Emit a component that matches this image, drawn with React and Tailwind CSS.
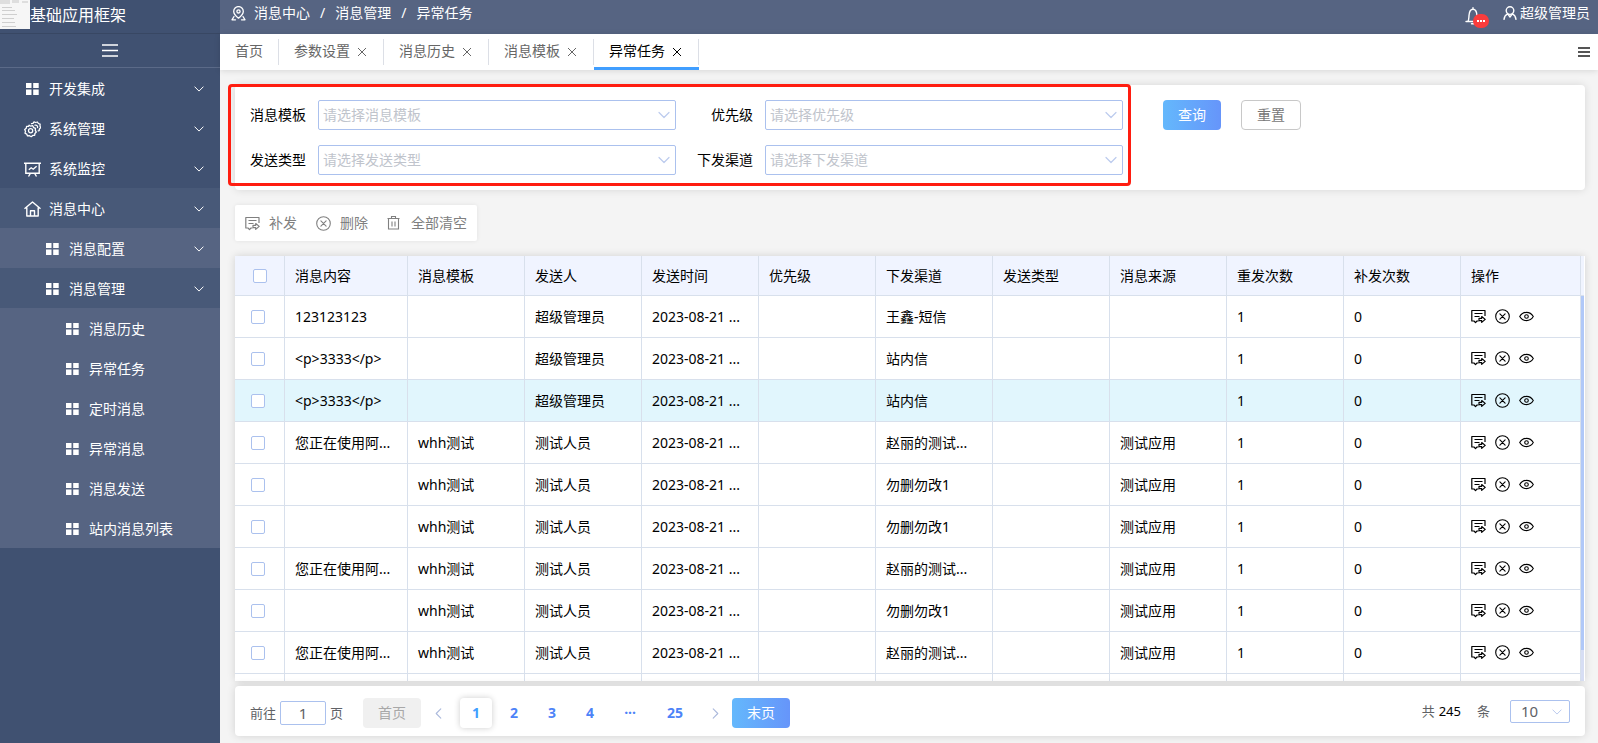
import React, { useState } from 'react'
import clsx from 'clsx'

const GridIcon = () => (
  <svg className="w-[13px] h-[12px] shrink-0" viewBox="0 0 13 12" fill="currentColor">
    <path d="M0 0h5.500v5H0zM7.200 0h5.500v5H7.200zM0 6.500h5.500V12H0zM7.200 6.500h5.500V12H7.200z" />
  </svg>
)

const GearIcon = () => (
  <svg className="w-[17px] h-[17px] shrink-0" viewBox="0 0 17 17" fill="none" stroke="currentColor" strokeWidth="1.300" strokeLinejoin="round" strokeLinecap="round">
    <path d="M5.200 4.200l1.600 1 1.900-.5 1 1.900 1.800.8-.2 2 1 1.700-1.400 1.300-.2 1.900-2 .1-1.500 1.300-1.700-1-2 .2-.8-1.800L1 12.200l.5-1.900-.8-1.800 1.500-1.200.4-1.900 1.900-.1z" />
    <circle cx="6.600" cy="9.800" r="2.100" />
    <path d="M7.500 2.600L9 2.300l1-1.500 1.700.7 1.700-.5 1 1.500 1.700.7-.1 1.900.7 1.600-1.300 1.200-.2 1.700-1 .3M11 4.200c1.600-.5 2.900.8 2.500 2.300" />
  </svg>
)

const MonitorIcon = () => (
  <svg className="w-[17px] h-[15px] shrink-0" viewBox="0 0 17 15" fill="none" stroke="currentColor" strokeWidth="1.400">
    <path d="M0 1.200h17M1.800 1.200v10h13.400v-10M4.800 7.800l2.400-2 2 1.400 3.400-3M6.500 11.200l-2 3.300M10.500 11.200l2 3.300" />
  </svg>
)

const HomeIcon = () => (
  <svg className="w-[17px] h-[16px] shrink-0" viewBox="0 0 17 16" fill="none" stroke="currentColor" strokeWidth="1.400" strokeLinejoin="round">
    <path d="M.5 7.800L8.500 1l8 6.800M2.800 6.500v8.500h11.400V6.500M6.500 15V9.800h4V15" />
  </svg>
)

const ChevronDown = ({ className }) => (
  <svg className={className} viewBox="0 0 12 12" fill="none" stroke="currentColor" strokeWidth="1.200" strokeLinecap="round" strokeLinejoin="round">
    <path d="M1 3.500l5 5 5-5" />
  </svg>
)

const CloseIcon = () => (
  <svg className="block w-3 h-3 p-[2px] overflow-visible" viewBox="0 0 8 8" fill="none" stroke="currentColor" strokeWidth="1">
    <path d="M0 0l8 8M8 0L0 8" />
  </svg>
)

const PinIcon = () => (
  <svg className="w-[15px] h-[15px]" viewBox="0 0 15 15" fill="none" stroke="currentColor" strokeWidth="1.300" strokeLinecap="round" strokeLinejoin="round">
    <path d="M7.500 12.200C4.700 9.900 2.700 8 2.700 5.400a4.800 4.800 0 019.600 0c0 2.600-2 4.500-4.800 6.800z" />
    <circle cx="7.500" cy="5.400" r="1.600" />
    <path d="M3 10.500L1 13.800h3.500M12 10.500l2 3.300h-3.500" />
  </svg>
)

const BellIcon = () => (
  <svg className="w-[18px] h-[18px]" viewBox="0 0 18 18" fill="none" stroke="currentColor" strokeWidth="1.400" strokeLinecap="round" strokeLinejoin="round">
    <path d="M1 14.500h14M2.800 14.500c1.200-1.500 1-3.500 1.200-6C4.200 5 5.500 2.200 8 2.200S11.800 5 12 8.500c.2 2.500 0 4.500 1.200 6M8 .8v1.400M6.500 16.800h3" />
  </svg>
)

const UserIcon = () => (
  <svg className="w-[14px] h-[14px]" viewBox="0 0 14 14" fill="none" stroke="currentColor" strokeWidth="1.400" strokeLinecap="round" strokeLinejoin="round">
    <circle cx="7" cy="4.600" r="3.800" />
    <path d="M1 13.300c.3-2.500 1.600-4.500 3.700-5.400L7 11l2.300-3.100c2.100.9 3.400 2.900 3.700 5.400" />
  </svg>
)

const ResendIcon = ({ className }) => (
  <svg className={className} viewBox="0 0 15 15" fill="none" stroke="currentColor" strokeWidth="1.200" strokeLinejoin="round">
    <path d="M14 7V1.500H.8v10.500h2.200l1.500 1.600L6 12h1.500M3.500 4.500h8M3.500 7.500h5" />
    <path d="M8 9.300h2.700V7.500l3.500 2.900-3.500 3v-1.700H8z" />
  </svg>
)

const CircleCloseIcon = ({ className }) => (
  <svg className={className} viewBox="0 0 15 15" fill="none" stroke="currentColor" strokeWidth="1.100" strokeLinecap="round">
    <circle cx="7.500" cy="7.500" r="6.800" />
    <path d="M4.900 4.900l5.200 5.200M10.100 4.900l-5.200 5.200" />
  </svg>
)

const EyeIcon = ({ className }) => (
  <svg className={className} viewBox="0 0 15 15" fill="none" stroke="currentColor" strokeWidth="1.100">
    <path d="M.7 7.500C2.300 4.800 4.700 3.400 7.500 3.400s5.200 1.400 6.800 4.100c-1.600 2.700-4 4.100-6.800 4.100S2.300 10.200.7 7.500z" />
    <circle cx="7.500" cy="7.500" r="1.800" />
  </svg>
)

const TrashIcon = ({ className }) => (
  <svg className={className} viewBox="0 0 13 14" fill="none" stroke="currentColor" strokeWidth="1.100">
    <path d="M.5 2.500h12M4.500 2.500v-2h4v2M1.500 2.500v10.500h10V2.500M5 5.500v5M8 5.500v5" />
  </svg>
)

const menus = [
  { name: '开发集成', icon: <GridIcon /> },
  { name: '系统管理', icon: <GearIcon /> },
  { name: '系统监控', icon: <MonitorIcon /> },
  { name: '消息中心', icon: <HomeIcon />, open: true },
]

const subMenus = [
  { name: '消息配置' },
  { name: '消息管理', open: true },
]

const leafMenus = ['消息历史', '异常任务', '定时消息', '异常消息', '消息发送', '站内消息列表']

const tabs = ['首页', '参数设置', '消息历史', '消息模板', '异常任务']

const columns = ['消息内容', '消息模板', '发送人', '发送时间', '优先级', '下发渠道', '发送类型', '消息来源', '重发次数', '补发次数']

const time = '2023-08-21 ...'
const rows = [
  ['123123123', '', '超级管理员', time, '', '王鑫-短信', '', '', '1', '0'],
  ['<p>3333</p>', '', '超级管理员', time, '', '站内信', '', '', '1', '0'],
  ['<p>3333</p>', '', '超级管理员', time, '', '站内信', '', '', '1', '0'],
  ['您正在使用阿...', 'whh测试', '测试人员', time, '', '赵丽的测试...', '', '测试应用', '1', '0'],
  ['', 'whh测试', '测试人员', time, '', '勿删勿改1', '', '测试应用', '1', '0'],
  ['', 'whh测试', '测试人员', time, '', '勿删勿改1', '', '测试应用', '1', '0'],
  ['您正在使用阿...', 'whh测试', '测试人员', time, '', '赵丽的测试...', '', '测试应用', '1', '0'],
  ['', 'whh测试', '测试人员', time, '', '勿删勿改1', '', '测试应用', '1', '0'],
  ['您正在使用阿...', 'whh测试', '测试人员', time, '', '赵丽的测试...', '', '测试应用', '1', '0'],
  ['', '', '', '', '', '', '', '', '', ''],
]

const Checkbox = ({ label }) => (
  <input
    type="checkbox"
    aria-label={label}
    className="block appearance-none w-[14px] h-[14px] bg-white border border-[#abc1ee] rounded-xs checked:bg-[#409eff]"
  />
)

const Sidebar = () => (
  <aside className="w-[220px] shrink-0 bg-[#405171] text-white">
    <div className="flex items-start h-[33px]">
      {/* ロゴ */}
      <svg className="w-[30px] h-[29px]" viewBox="0 0 30 29">
        <path fill="#f6f6f6" d="M0 0h30v29H0z" />
        <path fill="#dedede" d="M0 0h10v4H0zM12 0h7v3h-7zM22 1h6v2h-6z" />
        <path stroke="#cfcfcf" d="M2 7.500h10M2 10.500h13M2 14.500h15M2 18.500h12M2 22.500h13M2 26.500h14" />
      </svg>
      <h1 className="text-base leading-[30px]">基础应用框架</h1>
    </div>
    <button aria-label="折叠菜单" className="flex items-center justify-center w-full h-[35px] border-t border-t-[#384763] border-b border-b-[#5b6a88]">
      <svg className="w-4 h-[13px]" viewBox="0 0 16 13" stroke="currentColor" strokeWidth="1.300">
        <path d="M0 1h16M0 6.500h16M0 12h16" />
      </svg>
    </button>
    <nav className="text-sm">
      {menus.map((menu) => (
        <button key={menu.name} className={clsx('flex items-center w-full h-10 pl-6 pr-4 pt-[2px]', menu.open && 'bg-[#485978]')}>
          <span className="flex justify-center w-[17px] mr-2">{menu.icon}</span>
          {menu.name}
          <ChevronDown className="w-[10px] h-[10px] ml-auto" />
        </button>
      ))}
      {subMenus.map((menu) => (
        <button key={menu.name} className={clsx('flex items-center gap-[10px] w-full h-10 pl-[46px] pr-4 pt-[2px]', menu.open ? 'bg-[#485978]' : 'bg-[#566482]')}>
          <GridIcon />
          {menu.name}
          <ChevronDown className="w-[10px] h-[10px] ml-auto" />
        </button>
      ))}
      {leafMenus.map((name) => (
        <a key={name} href="#" className="flex items-center gap-[10px] h-10 pl-[66px] pt-[2px] bg-[#566482]">
          <GridIcon />
          {name}
        </a>
      ))}
    </nav>
  </aside>
)

const Header = () => (
  <header className="flex items-center justify-between h-[34px] pl-[11px] pr-2 pb-2 shrink-0 bg-[#566482] text-white text-sm">
    <div className="flex items-center gap-2">
      <PinIcon />
      <span>消息中心</span>
      <span className="px-[2px]">/</span>
      <span>消息管理</span>
      <span className="px-[2px]">/</span>
      <span>异常任务</span>
    </div>
    <div className="flex items-center gap-[14px]">
      <button aria-label="通知" className="relative flex w-6 pt-[6px]">
        <BellIcon />
        <span className="absolute right-0 -bottom-[3px] flex items-center justify-center gap-px w-4 h-[14px] rounded-full bg-[#f93c3c]">
          <i className="w-[2px] h-[2px] bg-white" />
          <i className="w-[2px] h-[2px] bg-white" />
          <i className="w-[2px] h-[2px] bg-white" />
        </span>
      </button>
      <button className="flex items-center gap-[3px]">
        <UserIcon />
        超级管理员
      </button>
    </div>
  </header>
)

const TabBar = ({ active, onChange }) => (
  <div className="flex items-center justify-between h-9 pr-2 shrink-0 bg-white shadow-[0_1px_6px_rgba(0,0,0,0.12)]">
    <div className="flex self-stretch text-sm">
      {tabs.map((tab) => (
        <div key={tab} className="flex flex-col justify-between pt-[5px]">
          <div className={`flex items-center gap-[6px] h-[26px] px-[15px] border-r border-[#dcdfe6] ${tab === active ? 'text-black' : 'text-[#666]'}`}>
            <button onClick={() => onChange(tab)} className="pb-[2px]">{tab}</button>
            {tab !== '首页' && (
              <button aria-label={`关闭${tab}`}>
                <CloseIcon />
              </button>
            )}
          </div>
          {tab === active && <span className="h-[3px] bg-[#409eff]" />}
        </div>
      ))}
    </div>
    <button aria-label="标签操作" className="text-[#555]">
      <svg className="w-3 h-[10px]" viewBox="0 0 12 10" fill="currentColor">
        <path d="M0 0h12v2H0zM0 4h12v2H0zM0 8h12v2H0z" />
      </svg>
    </button>
  </div>
)

const Field = ({ id, label }) => (
  <div className="flex items-center pr-[6px]">
    <label htmlFor={id} className="w-[83px] pr-3 shrink-0 text-right">{label}</label>
    <div className="relative flex-1">
      <select id={id} defaultValue="" className="block appearance-none w-full h-[30px] px-1 bg-white border border-[#abc1ee] rounded-xs text-[#c0c4cc]">
        <option value="">请选择{label}</option>
      </select>
      <ChevronDown className="absolute right-[6px] top-[9px] w-3 h-3 text-[#bccbee] pointer-events-none" />
    </div>
  </div>
)

const SearchForm = () => (
  <form className="flex pr-[9px] bg-white rounded-sm shadow-[0_0_8px_rgba(0,0,0,0.12)]">
    <div className="relative grid grid-cols-2 gap-y-[15px] w-2/3 py-[15px]">
      <Field id="template" label="消息模板" />
      <Field id="priority" label="优先级" />
      <Field id="sendType" label="发送类型" />
      <Field id="channel" label="下发渠道" />
      <div className="absolute -left-[7px] -right-[2px] -top-px bottom-1 border-3 border-[#ff1d10] rounded-sm pointer-events-none" />
    </div>
    <div className="flex items-start gap-5 pt-[15px] pl-[34px]">
      <button type="button" className="w-[58px] h-[30px] rounded-sm bg-linear-to-r from-[#64b8fc] to-[#6695fa] text-white">查询</button>
      <button type="reset" className="w-[60px] h-[30px] rounded-sm border border-[#c8c8c8] text-[#777]">重置</button>
    </div>
  </form>
)

const DataTable = () => (
  <div className="flex flex-1 min-h-0 pr-px bg-white shadow-[0_0_8px_rgba(0,0,0,0.14)]">
    <div className="flex-1 overflow-hidden">
      <table className="w-full table-fixed border-separate border-spacing-0 text-black">
        <colgroup>
          <col className="w-[50px]" />
          <col className="w-[123px]" />
          {columns.slice(1).map((name) => <col key={name} />)}
          <col className="w-[120px]" />
        </colgroup>
        <thead className="bg-[#f0f4ff]">
          <tr className="h-10">
            <th className="pl-[18px] border-r border-b border-[#d8e0ec]">
              <Checkbox label="全选" />
            </th>
            {columns.map((name) => (
              <th key={name} className="px-[10px] border-r border-b border-[#d8e0ec] text-left font-normal">{name}</th>
            ))}
            <th className="px-[10px] border-r border-b border-[#d8e0ec] text-left font-normal">操作</th>
          </tr>
        </thead>
        <tbody>
          {rows.map((row, i) => (
            <tr key={i} className={`h-[42px] ${i === 2 ? 'bg-[#e1f6fd]' : 'bg-white'}`}>
              <td className="pl-4 border-r border-b border-[#d8e0ec]">
                <Checkbox label={`选择第${i + 1}行`} />
              </td>
              {row.map((cell, j) => (
                <td key={j} className="px-[10px] border-r border-b border-[#d8e0ec] whitespace-nowrap">{cell}</td>
              ))}
              <td className="px-[10px] border-r border-b border-[#d8e0ec]">
                <div className="flex items-center gap-[9px]">
                  <button aria-label="补发"><ResendIcon className="block w-[15px] h-[15px]" /></button>
                  <button aria-label="删除"><CircleCloseIcon className="block w-[15px] h-[15px]" /></button>
                  <button aria-label="查看"><EyeIcon className="block w-[15px] h-[15px]" /></button>
                </div>
              </td>
            </tr>
          ))}
        </tbody>
      </table>
    </div>
    {/* スクロールバー */}
    <div className="flex flex-col w-[3px]">
      <div className="h-10 bg-[#f0f4ff] border-b border-[#d8e0ec]" />
      <div className="flex-1 bg-[#d7def4]">
        <div className="h-[92%] bg-[#b0c8f8]" />
      </div>
    </div>
  </div>
)

const Pagination = () => {
  const [page, setPage] = useState('1')
  return (
    <div className="flex items-center justify-between mt-[5px] h-[50px] px-[15px] shrink-0 bg-white rounded-sm shadow-[0_0_8px_rgba(0,0,0,0.14)] text-[#606266]">
      <div className="flex items-center pt-1">
        <label htmlFor="jump" className="text-[13px]">前往</label>
        <input id="jump" defaultValue="1" className="w-[46px] h-[24px] mx-1 border border-[#abc1ee] rounded-xs text-[15px] text-center" />
        <span className="text-[13px]">页</span>
        <button className="w-[58px] h-[30px] ml-5 rounded-sm bg-[#f0f0f0] text-[#a8a8a8]">首页</button>
        <button aria-label="上一页" className="flex justify-center w-8 ml-px text-[#abb9dc]">
          <ChevronDown className="w-[11px] h-[11px] rotate-90" />
        </button>
        <div className="flex items-center gap-[6px] ml-[6px] font-bold text-[#4d83f8]">
          {['1', '2', '3', '4', '···', '25'].map((n) => (
            <button
              key={n}
              onClick={() => setPage(n)}
              className={clsx('h-[30px] rounded-sm', n.length > 1 ? 'w-9' : 'w-8', n === '25' && 'ml-[3px]', n === page && 'text-[#409eff] shadow-[0_0_6px_rgba(0,0,0,0.2)]')}
            >
              {n}
            </button>
          ))}
        </div>
        <button aria-label="下一页" className="flex justify-center w-8 ml-[6px] text-[#abb9dc]">
          <ChevronDown className="w-[11px] h-[11px] -rotate-90" />
        </button>
        <button className="w-[58px] h-[30px] ml-px rounded-sm bg-linear-to-r from-[#64b8fc] to-[#6695fa] text-white">末页</button>
      </div>
      <div className="flex items-center">
        <span className="text-[13px]">共</span>
        <span className="mx-1 mr-4 text-[13px] text-black">245</span>
        <span className="text-[13px]">条</span>
        <div className="relative ml-5">
          <select aria-label="每页条数" className="block appearance-none w-[60px] h-[23px] pl-[10px] bg-white border border-[#abc1ee] rounded-xs text-[15px]">
            <option>10</option>
            <option>20</option>
          </select>
          <ChevronDown className="absolute right-2 top-[7px] w-[10px] h-[10px] text-[#bccbee] pointer-events-none" />
        </div>
      </div>
    </div>
  )
}

const App = () => {
  const [activeTab, setActiveTab] = useState('异常任务')

  return (
    <div className="flex h-screen overflow-hidden bg-[#f4f4f4] text-sm font-['Noto_Sans','Noto_Sans_CJK_SC',sans-serif]">
      <Sidebar />
      <div className="flex flex-col flex-1 min-w-0">
        <Header />
        <TabBar active={activeTab} onChange={setActiveTab} />
        <main className="flex flex-col flex-1 min-h-0 pl-[15px] pr-[13px] pt-[15px] pb-[7px]">
          <SearchForm />
          {/* 操作ボタン */}
          <div className="flex items-center self-start gap-[19px] h-9 my-[15px] px-[10px] shrink-0 bg-white rounded-xs shadow-[0_0_4px_rgba(0,0,0,0.08)] text-[#808080]">
            <button className="flex items-center gap-[9px]">
              <ResendIcon className="w-[15px] h-[15px]" />
              补发
            </button>
            <button className="flex items-center gap-[9px]">
              <CircleCloseIcon className="w-[15px] h-[15px]" />
              删除
            </button>
            <button className="flex items-center gap-[11px]">
              <TrashIcon className="w-[13px] h-[14px]" />
              全部清空
            </button>
          </div>
          <DataTable />
          <Pagination />
        </main>
      </div>
    </div>
  )
}

export default App
